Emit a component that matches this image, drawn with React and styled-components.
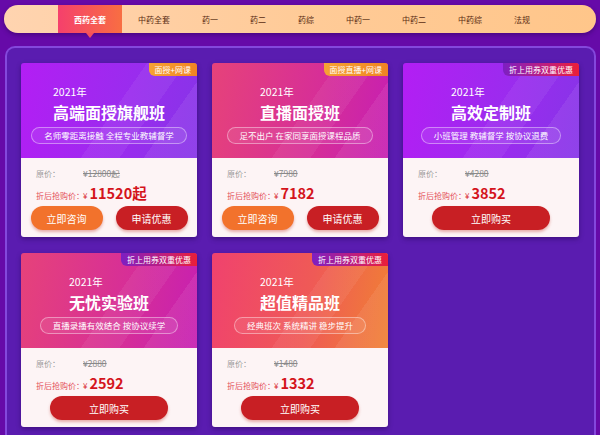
import styled, { createGlobalStyle, css } from "styled-components";

const GlobalStyle = createGlobalStyle`
  html, body {
    margin: 0;
    padding: 0;
    background: #660aa8;
    font-family: "Noto Sans CJK SC", "Noto Sans", sans-serif;
  }
  * {
    box-sizing: border-box;
  }
`;

const tabs = ["西药全套", "中药全套", "药一", "药二", "药综", "中药一", "中药二", "中药综", "法规"];

const courses = [
  {
    tone: "violet",
    badge: "面授+网课",
    badgeTone: "orange",
    title: "高端面授旗舰班",
    sub: "名师零距离接触 全程专业教辅督学",
    origin: "¥12800起",
    price: "11520起",
    buttons: ["立即咨询", "申请优惠"],
  },
  {
    tone: "pink",
    badge: "面授直播+网课",
    badgeTone: "orange",
    title: "直播面授班",
    sub: "足不出户 在家同享面授课程品质",
    origin: "¥7980",
    price: "7182",
    buttons: ["立即咨询", "申请优惠"],
  },
  {
    tone: "violet",
    badge: "折上用券双重优惠",
    badgeTone: "coupon",
    title: "高效定制班",
    sub: "小班管理 教辅督学 按协议退费",
    origin: "¥4280",
    price: "3852",
    buttons: ["立即购买"],
  },
  {
    tone: "pink",
    badge: "折上用券双重优惠",
    badgeTone: "coupon",
    title: "无忧实验班",
    sub: "直播录播有效结合 按协议续学",
    origin: "¥2880",
    price: "2592",
    buttons: ["立即购买"],
  },
  {
    tone: "orange",
    badge: "折上用券双重优惠",
    badgeTone: "coupon",
    title: "超值精品班",
    sub: "经典班次 系统精讲 稳步提升",
    origin: "¥1480",
    price: "1332",
    buttons: ["立即购买"],
  },
];

const headerTones = {
  violet: "linear-gradient(100deg, #b31ef4 0%, #9a2cee 60%, #8734e8 100%)",
  pink: "linear-gradient(100deg, #e6427a 0%, #d62e98 60%, #c61fb2 100%)",
  orange: "linear-gradient(100deg, #f0426e 0%, #ef5a56 55%, #f08034 100%)",
};

const App = () => {
  return (
    <Page>
      <GlobalStyle />
      <Nav>
        {tabs.map((t, i) => (
          <Tab key={t} $active={i === 0}>
            {t}
          </Tab>
        ))}
      </Nav>
      <Panel>
        <Grid>
          {courses.map((c) => (
            <Card key={c.title}>
              <Header $tone={c.tone}>
                <Badge $tone={c.badgeTone}>{c.badge}</Badge>
                <TitleBlock>
                  <Year>2021年</Year>
                  <Title>{c.title}</Title>
                </TitleBlock>
                <Pill>{c.sub}</Pill>
              </Header>
              <Body>
                <PriceRow>
                  <Label>原价：</Label>
                  <Origin>{c.origin}</Origin>
                </PriceRow>
                <PriceRow $sale>
                  <Label $sale>折后抢购价：</Label>
                  <Yen>¥</Yen>
                  <Price>{c.price}</Price>
                </PriceRow>
                <Buttons>
                  {c.buttons.map((b) => (
                    <Button
                      key={b}
                      $kind={b === "立即咨询" ? "orange" : "red"}
                      $wide={c.buttons.length === 1}
                    >
                      {b}
                    </Button>
                  ))}
                </Buttons>
              </Body>
            </Card>
          ))}
        </Grid>
      </Panel>
    </Page>
  );
};

export default App;

const Page = styled.div`
  width: 600px;
  height: 435px;
  overflow: hidden;
  padding: 5px 4px 0;
  background: #660aa8;
`;

const Nav = styled.div`
  height: 28px;
  border-radius: 14px;
  background: linear-gradient(90deg, #ffd4b0 0%, #ffcb98 50%, #ffc68a 100%);
  box-shadow: 0 2px 4px rgba(40, 0, 80, 0.45);
  display: flex;
  align-items: stretch;
  padding-left: 54px;
`;

const Tab = styled.div`
  position: relative;
  display: flex;
  align-items: center;
  padding: 0 16px;
  font-size: 8px;
  color: #5a2c12;
  ${(p) =>
    p.$active &&
    css`
      color: #fff;
      font-weight: 700;
      background: linear-gradient(90deg, #f5406c, #f86e42);
      &::after {
        content: "";
        position: absolute;
        left: 50%;
        bottom: -5px;
        margin-left: -4px;
        border-left: 4px solid transparent;
        border-right: 4px solid transparent;
        border-top: 5px solid #f2505e;
      }
    `}
`;

const Panel = styled.div`
  margin: 13px 0 0 1px;
  width: 591px;
  height: 400px;
  border: 2px solid #8448dc;
  border-bottom: none;
  border-radius: 10px 10px 0 0;
  background: #5a1cb0;
  padding: 15px 14px;
`;

const Grid = styled.div`
  display: grid;
  grid-template-columns: repeat(3, 176px);
  column-gap: 15px;
  row-gap: 16px;
`;

const Card = styled.div`
  border-radius: 3px;
  overflow: hidden;
  box-shadow: 0 2px 5px rgba(30, 0, 70, 0.45);
`;

const Header = styled.div`
  position: relative;
  height: 95px;
  padding-top: 22px;
  display: flex;
  flex-direction: column;
  align-items: center;
  background-image: linear-gradient(
      125deg,
      transparent 52%,
      rgba(255, 255, 255, 0.06) 52%,
      rgba(255, 255, 255, 0.06) 68%,
      transparent 68%,
      transparent 78%,
      rgba(255, 255, 255, 0.07) 78%
    ),
    ${(p) => headerTones[p.$tone]};
  color: #fff;
`;

const Badge = styled.div`
  position: absolute;
  top: 0;
  right: 0;
  height: 13px;
  padding: 0 6px;
  border-bottom-left-radius: 6px;
  font-size: 8px;
  line-height: 13px;
  color: #fff;
  white-space: nowrap;
  background: ${(p) =>
    p.$tone === "orange"
      ? "linear-gradient(90deg, #f6a234, #f08422)"
      : "linear-gradient(90deg, #7d1fc2, #c41e78 60%, #ea1f38)"};
`;

const TitleBlock = styled.div`
  display: flex;
  flex-direction: column;
  align-items: flex-start;
`;

const Year = styled.div`
  font-size: 10.5px;
  line-height: 14px;
`;

const Title = styled.div`
  margin-top: 2px;
  font-size: 16px;
  line-height: 22px;
  font-weight: 700;
  letter-spacing: 0;
`;

const Pill = styled.div`
  margin-top: 4px;
  height: 17px;
  padding: 0 12px;
  border-radius: 9px;
  border: 1px solid rgba(255, 255, 255, 0.4);
  background: rgba(255, 255, 255, 0.08);
  font-size: 8.5px;
  line-height: 15px;
  white-space: nowrap;
`;

const Body = styled.div`
  height: 79px;
  background: #fdf4f5;
  padding: 8px 0 0 15px;
`;

const PriceRow = styled.div`
  display: flex;
  align-items: baseline;
  height: ${(p) => (p.$sale ? "20px" : "14px")};
  line-height: ${(p) => (p.$sale ? "20px" : "14px")};
  margin-top: ${(p) => (p.$sale ? "3px" : "0")};
`;

const Label = styled.span`
  width: 47px;
  font-size: 8px;
  color: ${(p) => (p.$sale ? "#e4505c" : "#9a9a9a")};
  white-space: nowrap;
`;

const Origin = styled.span`
  font-size: 8.5px;
  color: #8a8a8a;
  text-decoration: line-through;
`;

const Yen = styled.span`
  font-size: 8px;
  color: #d8232a;
  margin-right: 2px;
`;

const Price = styled.span`
  font-size: 14.5px;
  font-weight: 700;
  color: #d4141c;
`;

const Buttons = styled.div`
  margin: 3px 0 0 -15px;
  display: flex;
  justify-content: center;
  gap: 13px;
`;

const Button = styled.div`
  width: ${(p) => (p.$wide ? "118px" : "72px")};
  height: 24px;
  border-radius: 12px;
  display: flex;
  align-items: center;
  justify-content: center;
  font-size: 10px;
  color: #fff;
  background: ${(p) => (p.$kind === "orange" ? "#f2722c" : "#c81f24")};
  box-shadow: 0 2px 3px rgba(190, 40, 30, 0.35);
`;
